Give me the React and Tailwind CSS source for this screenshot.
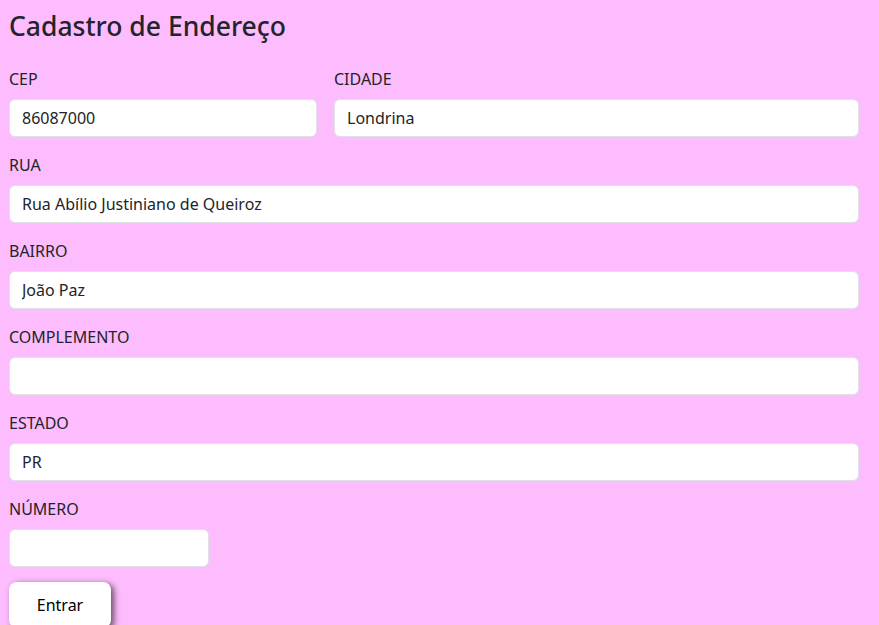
import { useState } from "react";

function Field({ label, value, onChange, className = "" }) {
    return (
        <div className={"flex flex-col " + className}>
            <label className="text-base leading-6 mb-2 text-[#212529]">{label}</label>
            <input
                type="text"
                value={value}
                onChange={(e) => onChange(e.target.value)}
                className="h-[38px] w-full rounded-md border border-[#dee2e6] bg-white px-3 text-base text-[#212529] outline-none"
            />
        </div>
    );
}

export default function App() {
    const [form, setForm] = useState({
        cep: "86087000",
        cidade: "Londrina",
        rua: "Rua Abílio Justiniano de Queiroz",
        bairro: "João Paz",
        complemento: "",
        estado: "PR",
        numero: "",
    });
    const set = (k) => (v) => setForm({ ...form, [k]: v });

    return (
        <div className="min-h-[625px] bg-[#fdbcfd] pl-[9px] pr-[20px] pt-[11px] font-['Segoe_UI','Noto_Sans',sans-serif]">
            <h3 className="text-[26.5px] leading-[31px] font-medium text-[#212529] mb-[25px]">Cadastro de Endereço</h3>
            <div className="flex flex-col gap-4">
                <div className="grid grid-cols-[308px_1fr] gap-[17px]">
                    <Field label="CEP" value={form.cep} onChange={set("cep")} />
                    <Field label="CIDADE" value={form.cidade} onChange={set("cidade")} />
                </div>
                <Field label="RUA" value={form.rua} onChange={set("rua")} />
                <Field label="BAIRRO" value={form.bairro} onChange={set("bairro")} />
                <Field label="COMPLEMENTO" value={form.complemento} onChange={set("complemento")} />
                <Field label="ESTADO" value={form.estado} onChange={set("estado")} />
                <Field label="NÚMERO" value={form.numero} onChange={set("numero")} className="w-[200px]" />
                <div className="-mt-px">
                    <button className="h-[46px] w-[102px] rounded-lg bg-white text-base text-black shadow-[3px_2px_6px_rgba(0,0,0,0.6)]">
                        Entrar
                    </button>
                </div>
            </div>
        </div>
    );
}
